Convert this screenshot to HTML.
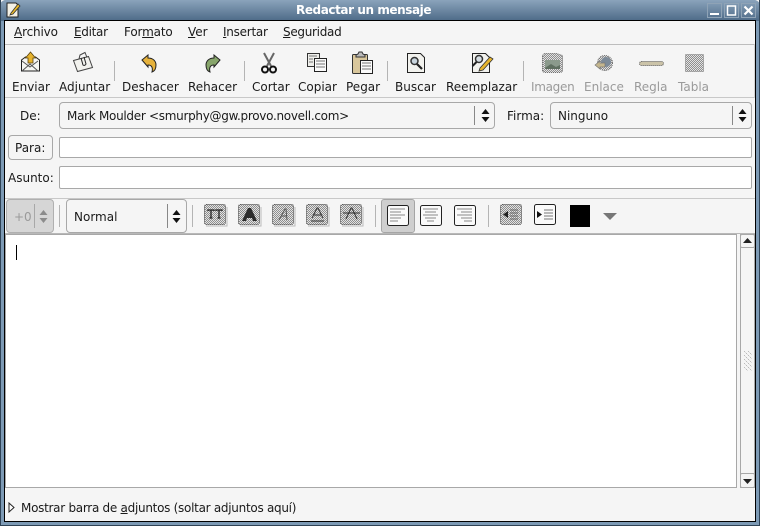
<!DOCTYPE html>
<html><head><meta charset="utf-8"><style>
html,body{margin:0;padding:0;background:#f5f5f5}
#w{position:relative;width:760px;height:526px;overflow:hidden;background:#f5f5f5;font-family:"DejaVu Sans",sans-serif;font-size:12px;color:#1a1a1a}
#w div,#w span.t,#w svg{position:absolute}
.t{position:absolute;white-space:nowrap;line-height:14px;height:14px}
.g{color:#9a9a9a}
.r{border:1px solid #a8a8a8;background:#fff;box-sizing:border-box;border-radius:2px}
.c{border:1px solid #a8a8a8;background:#f5f5f5;box-sizing:border-box;border-radius:4px}
.s{width:1px;background:#b4b4b4}
.h{height:1px;background:#c4c4c4}
u{text-decoration:underline}
</style></head><body><div id="w">
<svg width="0" height="0" style="left:0;top:0"><defs><pattern id="d" width="2" height="2" patternUnits="userSpaceOnUse"><rect width="2" height="2" fill="#e2e2e2"/><rect width="1" height="1" fill="#8e8e8e"/><rect x="1" y="1" width="1" height="1" fill="#8e8e8e"/></pattern><pattern id="p" width="4" height="4" patternUnits="userSpaceOnUse"><rect width="1" height="1" fill="#bbb"/><rect x="2" y="2" width="1" height="1" fill="#bbb"/><rect x="1" y="1" width="1" height="1" fill="#ddd"/><rect x="3" y="3" width="1" height="1" fill="#ddd"/></pattern></defs></svg>
<div style="left:0;top:0;width:760px;height:526px;background:#7d9ab5;border-radius:6px 6px 4px 4px"></div>
<div style="left:0;top:0;width:760px;height:21px;background:linear-gradient(#8aa3bb,#4d6a87);border-radius:6px 6px 0 0"></div>
<div style="left:0;top:0;width:1px;height:526px;background:#2f4356"></div>
<div style="left:759px;top:0;width:1px;height:526px;background:#2f4356"></div>
<div style="left:0;top:525px;width:760px;height:1px;background:#2f4356"></div>
<div style="left:4px;top:20px;width:752px;height:502px;background:#000"></div>
<div style="left:5px;top:21px;width:750px;height:500px;background:#f5f5f5"></div>
<span class="t" style="left:296px;top:3px;color:#fff;font-weight:bold;font-size:12px;letter-spacing:-.42px">Redactar un mensaje</span>
<svg style="left:5px;top:1px" width="17" height="18" viewBox="0 0 17 18"><path d="M2 2h9l2 2v12H2z" fill="#f4f1e6" stroke="#222"/><path d="M6 12l7-9 2 2-7 8-3 1z" fill="#e8b82a" stroke="#333" stroke-width=".8"/></svg>
<svg style="left:707px;top:3px" width="49" height="15" viewBox="0 0 49 15"><g fill="none"><rect x=".5" y=".5" width="14" height="14" stroke="#8fa3b6"/><rect x="17.500" y=".5" width="14" height="14" stroke="#8fa3b6"/><rect x="34.500" y=".5" width="14" height="14" stroke="#8fa3b6"/></g><rect x="3" y="10" width="9" height="2" fill="#fff"/><rect x="20.500" y="3" width="8" height="9" fill="none" stroke="#fff" stroke-width="1.500"/><path d="M37.500 3.500l8 8m0-8l-8 8" stroke="#fff" stroke-width="2.200"/></svg>

<span class="t" style="left:14px;top:25px;letter-spacing:-.15px"><u>A</u>rchivo</span>
<span class="t" style="left:74px;top:25px;letter-spacing:-.3px"><u>E</u>ditar</span>
<span class="t" style="left:124px;top:25px;letter-spacing:-.15px">For<u>m</u>ato</span>
<span class="t" style="left:188px;top:25px"><u>V</u>er</span>
<span class="t" style="left:223px;top:25px;letter-spacing:-.25px"><u>I</u>nsertar</span>
<span class="t" style="left:283px;top:25px;letter-spacing:-.3px"><u>S</u>eguridad</span>
<div class="h" style="left:5px;top:44px;width:750px;background:#bdbdbd"></div>
<div class="h" style="left:5px;top:97px;width:750px;background:#c8c8c8"></div>
<div class="h" style="left:5px;top:198px;width:750px;background:#c8c8c8"></div>
<div style="left:754px;top:44px;width:1px;height:54px;background:#d4d4d4"></div>

<svg style="left:20px;top:51px" width="21" height="22" viewBox="0 0 21 22"><path d="M1.500 9l4-3h10l4 3v11h-18z" fill="#f6f6f2" stroke="#222"/><path d="M2 20l8-7 8 7M2 10l8 6 8-6" fill="none" stroke="#555"/><path d="M10.500 1l5 6h-2.500v5h-5V7h-2.500z" fill="#e6b32e" stroke="#5a4410" stroke-width=".8"/></svg>
<svg style="left:72px;top:51px" width="22" height="22" viewBox="0 0 22 22"><path d="M1.500 9.500l15-4 4 11-15 4z" fill="#f2f2ee" stroke="#444"/><path d="M7 8l1-4 5-2.500 2 5" fill="none" stroke="#444"/><path d="M9 7l2 7a2 2 0 0 0 3-1l-2-7" fill="none" stroke="#222"/></svg>
<svg style="left:141px;top:54px" width="17" height="20" viewBox="0 0 17 20"><path d="M1 6l6-5v3c5 0 8 3 8 7 0 3-1 6-4 7 1-4 0-7-4-7v2z" fill="#e6b23c" stroke="#222"/></svg>
<svg style="left:204px;top:54px" width="17" height="20" viewBox="0 0 17 20"><path d="M16 6l-6-5v3c-5 0-8 3-8 7 0 3 1 6 4 7-1-4 0-7 4-7v2z" fill="#87a56b" stroke="#222"/></svg>
<svg style="left:260px;top:52px" width="18" height="22" viewBox="0 0 18 22"><path d="M4 1l7 13M14 1l-7 13" stroke="#666" stroke-width="2" fill="none"/><circle cx="5" cy="17.500" r="3" fill="none" stroke="#111" stroke-width="2"/><circle cx="13" cy="17.500" r="3" fill="none" stroke="#111" stroke-width="2"/></svg>
<svg style="left:306px;top:52px" width="22" height="21" viewBox="0 0 22 21"><rect x="1.500" y="1.500" width="12" height="13" fill="#eeeeea" stroke="#333"/><rect x="8.500" y="6.500" width="12" height="13" fill="#fafafa" stroke="#222"/><path d="M3 4h8M3 7h4M3 10h4M10 9h9M10 12h9M10 15h9" stroke="#777"/></svg>
<svg style="left:351px;top:51px" width="23" height="24" viewBox="0 0 23 24"><rect x="1.500" y="3.500" width="15" height="19" fill="#d9c79c" stroke="#333" rx="1"/><path d="M5 4l2-1 1-2h3l1 2 2 1v2H5z" fill="#bbb" stroke="#333"/><rect x="9.500" y="9.500" width="12" height="13" fill="#fafafa" stroke="#222"/><path d="M11 12h9M11 15h9M11 18h9" stroke="#777"/></svg>
<svg style="left:406px;top:52px" width="21" height="22" viewBox="0 0 21 22"><path d="M1.500 1.500h13l4 4v15h-17z" fill="#f2f2ee" stroke="#222"/><circle cx="8.500" cy="9" r="3.500" fill="#c9d5dd" stroke="#333" stroke-width="1.500"/><path d="M11 12l5 5" stroke="#222" stroke-width="2.200"/></svg>
<svg style="left:470px;top:52px" width="24" height="22" viewBox="0 0 24 22"><path d="M2.500 1.500h13l4 4v15h-17z" fill="#f2f2ee" stroke="#222"/><circle cx="9" cy="7" r="3.500" fill="#d5dde2" stroke="#333" stroke-width="1.500"/><path d="M6.500 10l-4 4" stroke="#222" stroke-width="2"/><path d="M10 16l10-11 3 2-10 11-4 1z" fill="#e7b52d" stroke="#333" stroke-width=".8"/></svg>
<svg style="left:541px;top:52px" width="23" height="22" viewBox="0 0 23 22"><path d="M1.500 3.500l2-2h12l6 2v16l-2 1h-16l-2-1z" fill="url(#d)" stroke="#666" stroke-dasharray="1 1"/><rect x="4" y="8" width="15" height="9" fill="#8b9a8c"/><path d="M4 16l6-4 5 3 4-2v4H4z" fill="#5f6f60"/></svg>
<svg style="left:594px;top:55px" width="20" height="17" viewBox="0 0 20 17"><circle cx="11" cy="8" r="7.500" fill="url(#d)" stroke="#666" stroke-dasharray="1 1"/><circle cx="12" cy="7" r="5" fill="#7c8a98"/><path d="M1 10l5-4v2h5v4H6v2z" fill="#c4b68e" stroke="#777" stroke-width=".7"/></svg>
<svg style="left:639px;top:61px" width="25" height="5" viewBox="0 0 25 5"><rect x=".5" y=".5" width="24" height="4" rx="2" fill="#cbc3a8" stroke="#555" stroke-dasharray="1 1"/></svg>
<svg style="left:685px;top:54px" width="19" height="18" viewBox="0 0 19 18"><rect x=".5" y=".5" width="18" height="17" fill="url(#d)" stroke="#777" stroke-dasharray="1 1"/></svg>

<span class="t" style="left:12px;top:80px">Enviar</span>
<span class="t" style="left:59px;top:80px">Adjuntar</span>
<span class="t" style="left:122px;top:80px">Deshacer</span>
<span class="t" style="left:188px;top:80px">Rehacer</span>
<span class="t" style="left:252px;top:80px">Cortar</span>
<span class="t" style="left:298px;top:80px">Copiar</span>
<span class="t" style="left:346px;top:80px">Pegar</span>
<span class="t" style="left:395px;top:80px">Buscar</span>
<span class="t" style="left:446px;top:80px">Reemplazar</span>
<span class="t g" style="left:531px;top:80px;letter-spacing:-.3px">Imagen</span>
<span class="t g" style="left:584px;top:80px">Enlace</span>
<span class="t g" style="left:634px;top:80px">Regla</span>
<span class="t g" style="left:678px;top:80px">Tabla</span>
<div class="s" style="left:114px;top:61px;height:20px"></div>
<div class="s" style="left:244px;top:61px;height:20px"></div>
<div class="s" style="left:387px;top:61px;height:20px"></div>
<div class="s" style="left:523px;top:61px;height:20px"></div>

<span class="t" style="left:20px;top:109px">De:</span>
<div class="c" style="left:59px;top:102px;width:436px;height:27px"></div>
<span class="t" style="left:67px;top:109px;letter-spacing:-.29px">Mark Moulder &lt;smurphy@gw.provo.novell.com&gt;</span>
<div class="s" style="left:474px;top:106px;height:19px;background:#888"></div>
<svg style="left:481px;top:109px" width="9" height="13" viewBox="0 0 9 13"><path d="M4.500 0l4 5H.5zM4.500 13l4-5H.5z" fill="#111"/></svg>
<span class="t" style="left:507px;top:109px">Firma:</span>
<div class="c" style="left:550px;top:102px;width:202px;height:27px"></div>
<span class="t" style="left:558px;top:109px">Ninguno</span>
<div class="s" style="left:732px;top:106px;height:19px;background:#888"></div>
<svg style="left:738px;top:109px" width="9" height="13" viewBox="0 0 9 13"><path d="M4.500 0l4 5H.5zM4.500 13l4-5H.5z" fill="#111"/></svg>

<div class="c" style="left:8px;top:135px;width:45px;height:25px"></div>
<span class="t" style="left:15px;top:141px">Para:</span>
<div class="r" style="left:59px;top:137px;width:693px;height:21px"></div>
<span class="t" style="left:8px;top:171px">Asunto:</span>
<div class="r" style="left:59px;top:166px;width:693px;height:23px"></div>

<div style="left:6px;top:199px;width:48px;height:34px;background:#d6d6d6;border:1px solid #b0b0b0;box-sizing:border-box;border-radius:4px"></div>
<span class="t" style="left:14px;top:210px;color:#9a9a9a">+0</span>
<div class="s" style="left:34px;top:204px;height:24px;background:#a8a8a8"></div>
<svg style="left:39px;top:210px" width="9" height="13" viewBox="0 0 9 13"><path d="M4.500 0l4 5H.5zM4.500 13l4-5H.5z" fill="#8c8c8c"/></svg>
<div class="s" style="left:59px;top:205px;height:22px"></div>
<div class="c" style="left:66px;top:199px;width:121px;height:34px"></div>
<span class="t" style="left:74px;top:210px">Normal</span>
<div class="s" style="left:167px;top:204px;height:24px;background:#888"></div>
<svg style="left:172px;top:210px" width="9" height="13" viewBox="0 0 9 13"><path d="M4.500 0l4 5H.5zM4.500 13l4-5H.5z" fill="#111"/></svg>
<div class="s" style="left:192px;top:205px;height:22px"></div>

<svg style="left:204px;top:204px" width="160" height="23" viewBox="0 0 160 23">
<g fill="none" stroke="#bbb"><path d="M23 3v19H2M57 3v19H36M91 3v19H70M125 3v19h-21M159 3v19h-21"/></g>
<g fill="url(#d)" stroke="#333" stroke-dasharray="1 1"><rect x=".5" y=".5" width="21" height="20" rx="2"/><rect x="34.500" y=".5" width="21" height="20" rx="2"/><rect x="68.500" y=".5" width="21" height="20" rx="2"/><rect x="102.500" y=".5" width="21" height="20" rx="2"/><rect x="136.500" y=".5" width="21" height="20" rx="2"/></g>
<path d="M4 7V6h6v1M7 6v8M5.500 14h3M12 7V6h6v1M15 6v8M13.500 14h3" fill="none" stroke="#222" stroke-width="1.300"/>
<path d="M38 17l6-13h3l6 13h-4l-1-3h-5l-1 3z" fill="#2c2c2c"/>
<path d="M75 16l6-11h1l1 11M77 12h6" fill="none" stroke="#555"/>
<path d="M108 14l5-10h1l5 10M110 11h7" fill="none" stroke="#333"/><path d="M107 17h13" stroke="#333"/>
<path d="M142 15l5-11h1l5 11M139 9h17" fill="none" stroke="#333"/>
</svg>
<div class="s" style="left:375px;top:205px;height:22px"></div>
<div style="left:381px;top:199px;width:34px;height:34px;background:#cfcfcf;border:1px solid #a5a5a5;box-sizing:border-box;border-radius:3px"></div>
<svg style="left:387px;top:205px" width="93" height="23" viewBox="0 0 93 23"><g fill="#fafafa" stroke="#222"><rect x=".5" y=".5" width="21" height="20" rx="2"/><rect x="33.500" y=".5" width="21" height="20" rx="2"/><rect x="67.500" y=".5" width="21" height="20" rx="2"/></g>
<path d="M3 4h15M3 7h11M3 10h15M3 13h11M3 16h8M36 4h15M38 7h11M36 10h15M38 13h11M40 16h7M70 4h15M74 7h11M70 10h15M74 13h11M77 16h8" stroke="#888"/></svg>
<div class="s" style="left:488px;top:205px;height:22px"></div>
<svg style="left:500px;top:204px" width="57" height="22" viewBox="0 0 57 22"><rect x=".5" y=".5" width="21" height="20" rx="2" fill="url(#d)" stroke="#333" stroke-dasharray="1 1"/><path d="M8 7v7l-5-3.500z" fill="#222"/><path d="M10 6h8M10 9h8M10 12h8M10 15h8" stroke="#666"/><rect x="34.500" y=".5" width="21" height="20" rx="2" fill="#fafafa" stroke="#222"/><path d="M37 7v7l5-3.500z" fill="#111"/><path d="M44 6h9M44 9h9M44 12h9M44 15h9" stroke="#777"/></svg>
<div style="left:570px;top:205px;width:20px;height:22px;background:#000"></div>
<svg style="left:603px;top:213px" width="14" height="7" viewBox="0 0 14 7"><path d="M0 0h14L7 7z" fill="#777"/></svg>

<div class="h" style="left:5px;top:233px;width:750px;background:#b8b8b8"></div>
<div class="r" style="left:5px;top:234px;width:732px;height:254px;border-radius:0;border-color:#a8a8a8"></div>
<div style="left:16px;top:245px;width:1px;height:15px;background:#000"></div>
<div class="c" style="left:740px;top:234px;width:15px;height:254px;border-radius:0;background:#f5f5f5"></div>
<div class="c" style="left:740px;top:234px;width:15px;height:14px;border-radius:2px"></div>
<svg style="left:743px;top:238px" width="9" height="5" viewBox="0 0 9 5"><path d="M4.500 0l4.500 5H0z" fill="#222"/></svg>
<div class="c" style="left:740px;top:473px;width:15px;height:15px;border-radius:2px"></div>
<svg style="left:743px;top:479px" width="9" height="5" viewBox="0 0 9 5"><path d="M4.500 5L9 0H0z" fill="#222"/></svg>
<svg style="left:744px;top:351px" width="8" height="20" viewBox="0 0 8 20"><rect width="8" height="20" fill="url(#p)"/></svg>

<svg style="left:8px;top:502px" width="7" height="11" viewBox="0 0 7 11"><path d="M1 1l5 4.500L1 10z" fill="#fff" stroke="#222"/></svg>
<span class="t" style="left:21px;top:501px;letter-spacing:-.28px">Mostrar barra de <u>a</u>djuntos (soltar adjuntos aquí)</span>
</div></body></html>
